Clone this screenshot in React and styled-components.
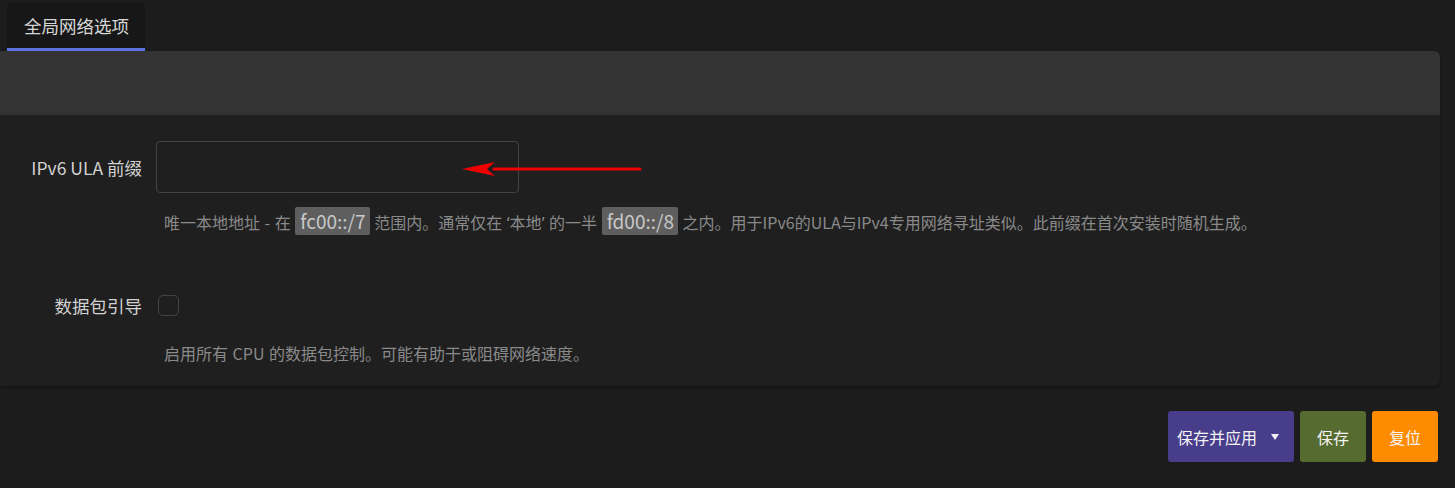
import React from "react";
import styled, { createGlobalStyle } from "styled-components";

const GlobalStyle = createGlobalStyle`
  html, body {
    margin: 0;
    padding: 0;
    background: #1c1c1c;
    font-family: "Noto Sans CJK SC", "Noto Sans", sans-serif;
  }
`;

const Page = styled.div`
  position: relative;
  width: 1455px;
  height: 488px;
  overflow: hidden;
  background: #1c1c1c;
`;

const Tabs = styled.ul`
  display: flex;
  list-style: none;
  margin: 0;
  padding: 3px 0 0 7px;
`;

const Tab = styled.li`
  height: 45px;
  padding: 0 16px 0 17px;
  display: flex;
  align-items: center;
  background: #171717;
  border-radius: 4px 4px 0 0;
  border-bottom: 3px solid #5e72e4;
  color: #d6d6d6;
  font-size: 17.5px;
`;

const Panel = styled.div`
  margin-right: 15px;
  background: #1f1f1f;
  border-radius: 0 6px 6px 0;
  box-shadow: 0 1px 3px rgba(0, 0, 0, 0.45);
  overflow: hidden;
`;

const PanelHead = styled.div`
  height: 64px;
  background: #333333;
`;

const PanelBody = styled.div`
  padding: 26px 0 19px;
`;

const Row = styled.div`
  display: flex;
  align-items: center;
  height: 52px;
  margin-top: ${p => p.$top || 0}px;
`;

const Label = styled.label`
  flex: none;
  width: 156px;
  padding-right: 14px;
  box-sizing: border-box;
  text-align: right;
  color: #d2d2d2;
  font-size: 17.5px;
`;

const Input = styled.input`
  width: 363px;
  height: 52px;
  box-sizing: border-box;
  background: #1f1f1f;
  border: 1px solid #444;
  border-radius: 4px;
  outline: none;
`;

const Check = styled.span`
  width: 21px;
  height: 21px;
  margin-left: 2px;
  box-sizing: border-box;
  border: 1px solid #444;
  border-radius: 5px;
`;

const Desc = styled.div`
  margin: ${p => p.$top}px 0 0 164px;
  line-height: 28px;
  color: #8a8a8a;
  font-size: 16px;
  word-spacing: 1px;
`;

const Quote = styled.span`
  font-family: "Noto Sans", sans-serif;
`;

const Code = styled.code`
  display: inline-block;
  padding: 0 4px 0 5px;
  background: #5e5e5e;
  color: #c8c8c8;
  font-family: "Noto Sans CJK SC", "Noto Sans", sans-serif;
  font-size: 19px;
  line-height: 28px;
  word-spacing: 0;
  border-radius: 2px;
`;

const Actions = styled.div`
  display: flex;
  justify-content: flex-end;
  gap: 6px;
  margin-top: 25px;
  padding-right: 17px;
`;

const Button = styled.button`
  height: 51px;
  padding: ${p => p.$pad || "0 17px"};
  border: none;
  border-radius: 3px;
  background: ${p => p.$bg};
  color: #f4f4f4;
  font-family: "Noto Sans CJK SC", "Noto Sans", sans-serif;
  font-size: 16px;
  display: flex;
  align-items: center;
  gap: 14px;
`;

const Caret = styled.span`
  width: 0;
  height: 0;
  border-left: 4px solid transparent;
  border-right: 4px solid transparent;
  border-top: 6px solid #f4f4f4;
`;

const Arrow = styled.svg`
  position: absolute;
  left: 458px;
  top: 160px;
  overflow: visible;
`;

export default function App() {
  return (
    <Page>
      <GlobalStyle />
      <Tabs>
        <Tab>全局网络选项</Tab>
      </Tabs>
      <Panel>
        <PanelHead />
        <PanelBody>
          <Row>
            <Label>IPv6 ULA 前缀</Label>
            <Input type="text" />
          </Row>
          <Desc $top={14}>
            唯一本地地址 - 在 <Code>fc00::/7</Code> 范围内。通常仅在 <Quote>‘</Quote>本地<Quote>’</Quote> 的一半{" "}
            <Code>fd00::/8</Code> 之内。用于IPv6的ULA与IPv4专用网络寻址类似。此前缀在首次安装时随机生成。
          </Desc>
          <Row $top={42}>
            <Label>数据包引导</Label>
            <Check />
          </Row>
          <Desc $top={8}>启用所有 CPU 的数据包控制。可能有助于或阻碍网络速度。</Desc>
        </PanelBody>
      </Panel>
      <Actions>
        <Button $bg="#483d8b" $pad="0 15px 0 9px">
          保存并应用 <Caret />
        </Button>
        <Button $bg="#556b2f">保存</Button>
        <Button $bg="#ff8c00">复位</Button>
      </Actions>
      <Arrow width="190" height="20" viewBox="0 0 190 20">
        <line x1="36" y1="9" x2="182" y2="9" stroke="#ee0000" strokeWidth="3" strokeLinecap="round" />
        <polygon points="4,9 37,2 29,9 37,16" fill="#ee0000" />
      </Arrow>
    </Page>
  );
}
